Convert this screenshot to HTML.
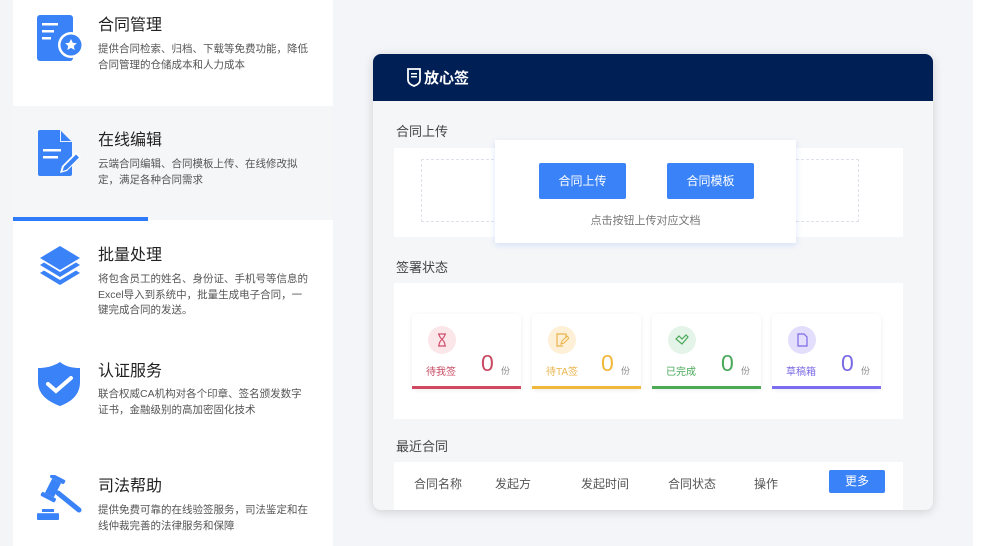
<!DOCTYPE html>
<html><head><meta charset="utf-8"><style>
*{margin:0;padding:0;box-sizing:border-box}
body{width:988px;height:546px;overflow:hidden;background:#fff;font-family:"Liberation Sans","Noto Sans CJK SC",sans-serif;position:relative}
.abs{position:absolute}
#leftbg{left:0;top:0;width:13px;height:546px;background:#f4f5f7}
#left{left:13px;top:0;width:320px;height:546px;background:#fff}
#right{left:333px;top:0;width:640px;height:546px;background:#f4f5f8}
.item2{left:13px;top:106px;width:320px;height:114px;background:#f5f6f8}
.bar{left:13px;top:217px;width:135px;height:4px;background:#2f7af8}
.t{position:absolute;left:98px;font-size:16px;color:#222}
.d{position:absolute;left:98px;font-size:10.5px;color:#555;line-height:15.5px;white-space:nowrap}
.ic{position:absolute;left:36px}
#card{left:373px;top:54px;width:560px;height:456px;background:#f5f6f8;border-radius:8px;box-shadow:0 2px 10px rgba(0,0,0,.15);overflow:hidden}
#hd{left:0;top:0;width:560px;height:47px;background:#001f55}
.sec{position:absolute;font-size:13px;color:#444}
.wb{position:absolute;background:#fff}
.btn{position:absolute;background:#3a82f8;color:#fff;font-size:12px;text-align:center;border-radius:2px}
.sc{position:absolute;top:260px;width:109px;height:75px;background:#fff;border-radius:4px;box-shadow:0 1px 5px rgba(0,0,0,.08)}
.sc .c{position:absolute;left:16px;top:12px;width:28px;height:28px;border-radius:50%}
.sc .l{position:absolute;left:14px;top:49px;font-size:10px}
.sc .n{position:absolute;left:69px;top:36px;font-size:23px}
.sc .f{position:absolute;left:89px;top:50px;font-size:9px;color:#888}
.sc .b{position:absolute;left:0;bottom:0;width:100%;height:3px}
.th{position:absolute;top:421px;font-size:12px;color:#555}
</style></head><body>
<div class="abs" id="leftbg"></div>
<div class="abs" id="left"></div>
<div class="abs" id="right"></div>
<div class="abs item2"></div>
<div class="abs bar"></div>

<svg class="ic" style="top:14px" width="48" height="48" viewBox="0 0 48 48"><rect x="1" y="1" width="36" height="46" rx="3" fill="#3a82f8"/><rect x="6" y="9" width="16" height="2.5" fill="#fff"/><rect x="6" y="16" width="12" height="2.5" fill="#fff"/><rect x="6" y="23" width="9" height="2.5" fill="#fff"/><circle cx="35" cy="31" r="13" fill="#fff"/><circle cx="35" cy="31" r="10.5" fill="#3a82f8"/><path d="M35 25l1.8 3.8 4 .4-3 2.8.9 4-3.7-2.1-3.7 2.1.9-4-3-2.8 4-.4z" fill="#fff"/></svg>
<svg class="ic" style="top:129px" width="48" height="48" viewBox="0 0 48 48"><path d="M4 1h20l12 12v32a2 2 0 0 1-2 2H4a2 2 0 0 1-2-2V3a2 2 0 0 1 2-2z" fill="#3a82f8"/><path d="M24 1v12h12" fill="#fff" opacity=".9"/><path d="M25 2v10h10z" fill="#3a82f8"/><rect x="7" y="20" width="18" height="2.5" fill="#fff"/><rect x="7" y="27" width="15" height="2.5" fill="#fff"/><path d="M24 44l2-7 14-14 5 5-14 14z" fill="#fff"/><path d="M26.5 42l1.5-4.5 12-12 3 3-12 12z" fill="#3a82f8"/></svg>
<svg class="ic" style="top:244px" width="48" height="48" viewBox="0 0 48 48"><path d="M24 2l20 12-20 12L4 14z" fill="#3a82f8"/><path d="M4 21l4-2.5 16 9.5 16-9.5 4 2.5-20 12z" fill="#3a82f8"/><path d="M4 29l4-2.5 16 9.5 16-9.5 4 2.5-20 12z" fill="#3a82f8"/></svg>
<svg class="ic" style="top:360px" width="48" height="48" viewBox="0 0 48 48"><path d="M24 2c6 5 13 6 20 6v14c0 13-9 20-20 24C13 42 2 35 2 22V8c7 0 14-1 22-6z" fill="#3a82f8"/><path d="M12 24l8 7 15-13" stroke="#fff" stroke-width="4" fill="none" stroke-linecap="round"/></svg>
<svg class="ic" style="top:475px" width="48" height="48" viewBox="0 0 48 48">
 <g transform="translate(17 13) rotate(27)" fill="#3a82f8"><rect x="-5" y="-8" width="10" height="16"/><rect x="-8" y="-12.5" width="16" height="4.5" rx="1.5"/><rect x="-8" y="8" width="16" height="4.5" rx="1.5"/></g>
 <path d="M22 18l21 17" stroke="#3a82f8" stroke-width="5" stroke-linecap="round"/>
 <rect x="1" y="38" width="22" height="7" rx="1" fill="#3a82f8"/><rect x="6" y="34" width="12" height="4" fill="#3a82f8"/><rect x="1" y="37" width="22" height="1.2" fill="#fff"/></svg>

<div class="t" style="top:11px">合同管理</div>
<div class="d" style="top:42px">提供合同检索、归档、下载等免费功能，降低<br>合同管理的仓储成本和人力成本</div>
<div class="t" style="top:126px">在线编辑</div>
<div class="d" style="top:157px">云端合同编辑、合同模板上传、在线修改拟<br>定，满足各种合同需求</div>
<div class="t" style="top:241px">批量处理</div>
<div class="d" style="top:272px">将包含员工的姓名、身份证、手机号等信息的<br>Excel导入到系统中，批量生成电子合同，一<br>键完成合同的发送。</div>
<div class="t" style="top:357px">认证服务</div>
<div class="d" style="top:387px">联合权威CA机构对各个印章、签名颁发数字<br>证书，金融级别的高加密固化技术</div>
<div class="t" style="top:472px">司法帮助</div>
<div class="d" style="top:503px">提供免费可靠的在线验签服务，司法鉴定和在<br>线仲裁完善的法律服务和保障</div>

<div class="abs" id="card">
 <div class="abs" id="hd">
  <svg class="abs" style="left:33px;top:14px" width="16" height="19" viewBox="0 0 16 19"><path d="M2 1h12v11c0 3-3 5-6 6-3-1-6-3-6-6z" fill="none" stroke="#fff" stroke-width="1.8"/><rect x="5" y="5" width="6" height="1.5" fill="#fff"/><rect x="5" y="8" width="6" height="1.5" fill="#fff"/></svg>
  <div class="abs" style="left:51px;top:13px;color:#fff;font-size:15px;font-weight:bold">放心签</div>
 </div>
 <div class="sec" style="left:23px;top:67px">合同上传</div>
 <div class="wb" style="left:21px;top:94px;width:509px;height:89px"></div>
 <div class="abs" style="left:48px;top:105px;width:438px;height:63px;border:1px dashed #dde2ea"></div>
 <div class="wb" style="left:122px;top:86px;width:301px;height:103px;box-shadow:0 2px 6px rgba(58,130,248,.18)"></div>
 <div class="btn" style="left:166px;top:109px;width:87px;height:36px;line-height:36px">合同上传</div>
 <div class="btn" style="left:294px;top:109px;width:87px;height:36px;line-height:36px">合同模板</div>
 <div class="abs" style="left:122px;width:301px;top:158px;text-align:center;font-size:11px;color:#777">点击按钮上传对应文档</div>

 <div class="sec" style="left:23px;top:203px">签署状态</div>
 <div class="wb" style="left:21px;top:229px;width:509px;height:136px"></div>
 <div class="sc" style="left:39px"><div class="c" style="background:#fbe6ea"></div><svg class="abs" style="left:25px;top:19px" width="10" height="14"><path d="M1 1h8M1 13h8M2 1c0 5 6 5 6 12M8 1c0 5-6 5-6 12" stroke="#d0506a" fill="none" stroke-width="1.2"/></svg><div class="l" style="color:#c84a62">待我签</div><div class="n" style="color:#c84a62">0</div><div class="f">份</div><div class="b" style="background:#cf4a60"></div></div>
 <div class="sc" style="left:159px"><div class="c" style="background:#fdf0d6"></div><svg class="abs" style="left:24px;top:19px" width="13" height="14"><path d="M10 5V1H1v12h6" stroke="#e9b44c" fill="none" stroke-width="1.2"/><path d="M5 11l1-3 5-5 2 2-5 5z" stroke="#e9b44c" fill="none" stroke-width="1.1"/></svg><div class="l" style="color:#e9b44c">待TA签</div><div class="n" style="color:#f0b83a">0</div><div class="f">份</div><div class="b" style="background:#f0b83a"></div></div>
 <div class="sc" style="left:279px"><div class="c" style="background:#e5f4e8"></div><svg class="abs" style="left:23px;top:20px" width="14" height="11"><path d="M1 5l3-3 3 3 4-4 2 2-6 7z" stroke="#4aa85a" fill="none" stroke-width="1.2"/></svg><div class="l" style="color:#4aa85a">已完成</div><div class="n" style="color:#4aa85a">0</div><div class="f">份</div><div class="b" style="background:#4caa55"></div></div>
 <div class="sc" style="left:399px"><div class="c" style="background:#e3defb"></div><svg class="abs" style="left:25px;top:19px" width="11" height="14"><path d="M1 1h6l3 3v9H1z" stroke="#7a6ae6" fill="none" stroke-width="1.2"/></svg><div class="l" style="color:#7a6ae6">草稿箱</div><div class="n" style="color:#7a6ae6">0</div><div class="f">份</div><div class="b" style="background:#7b6cf0"></div></div>

 <div class="sec" style="left:23px;top:382px">最近合同</div>
 <div class="wb" style="left:21px;top:408px;width:509px;height:60px"></div>
 <div class="th" style="left:41px">合同名称</div>
 <div class="th" style="left:122px">发起方</div>
 <div class="th" style="left:208px">发起时间</div>
 <div class="th" style="left:295px">合同状态</div>
 <div class="th" style="left:381px">操作</div>
 <div class="btn" style="left:456px;top:416px;width:56px;height:23px;line-height:23px">更多</div>
</div>
</body></html>
